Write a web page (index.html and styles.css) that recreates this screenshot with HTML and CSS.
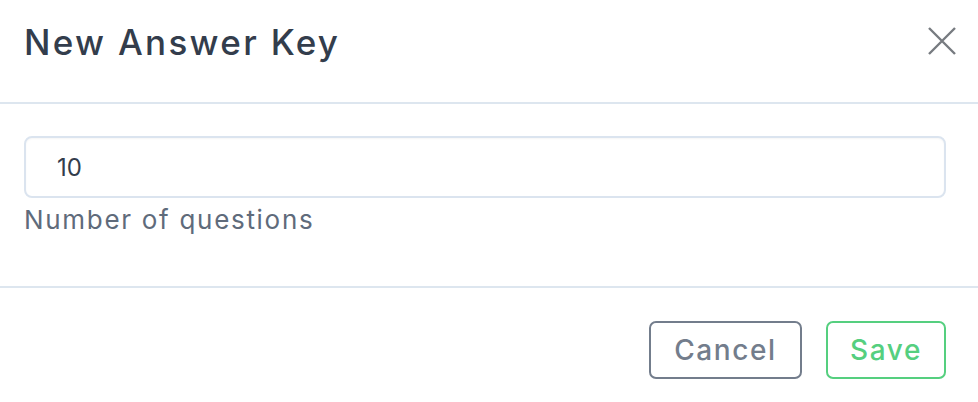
FILE: index.html
```html
<!DOCTYPE html>
<html lang="en">
<head>
<meta charset="utf-8">
<title>New Answer Key</title>
<link rel="stylesheet" href="styles.css">
</head>
<body>
<div class="modal">
  <header class="modal-header">
    <h1 class="modal-title">New Answer Key</h1>
    <button class="close-btn" aria-label="Close">
      <svg width="28" height="28" viewBox="0 0 28 28"><path d="M1 1 L27 27 M27 1 L1 27" stroke="#777b80" stroke-width="2.4" fill="none"/></svg>
    </button>
  </header>
  <section class="modal-body">
    <div class="field">
      <div class="input">10</div>
      <div class="help">Number of questions</div>
    </div>
  </section>
  <footer class="modal-footer">
    <button class="btn btn-cancel">Cancel</button>
    <button class="btn btn-save">Save</button>
  </footer>
</div>
</body>
</html>
```

FILE: styles.css
```css
html, body {
  margin: 0;
  padding: 0;
  background: #ffffff;
}
body {
  font-family: Inter, "Liberation Sans", sans-serif;
}
.modal {
  width: 978px;
  height: 402px;
  display: flex;
  flex-direction: column;
}
.modal-header {
  height: 104px;
  box-sizing: border-box;
  border-bottom: 2px solid #dde6ef;
  display: flex;
  align-items: center;
  justify-content: space-between;
  padding: 0 22px 0 24px;
}
.modal-title {
  margin: 0;
  font-size: 35px;
  font-weight: 500;
  color: #333d4c;
  letter-spacing: 2.3px;
  line-height: 40px;
  padding-bottom: 18px;
}
.close-btn {
  background: none;
  border: 0;
  padding: 0;
  width: 28px;
  height: 28px;
  margin-bottom: 20px;
  display: flex;
}
.modal-body {
  height: 184px;
  box-sizing: border-box;
  border-bottom: 2px solid #dde6ef;
  padding: 32px 32px 0 24px;
}
.input {
  height: 62px;
  box-sizing: border-box;
  border: 2px solid #dbe4ef;
  border-radius: 8px;
  padding-left: 31px;
  display: flex;
  align-items: center;
  font-size: 24px;
  color: #333d4c;
  box-shadow: inset 0 1px 2px rgba(0,0,0,0.04);
}
.help {
  margin-top: 4px;
  font-size: 26px;
  line-height: 36px;
  color: #5f6b7b;
  letter-spacing: 1.7px;
}
.modal-footer {
  display: flex;
  justify-content: flex-end;
  gap: 24px;
  padding: 33px 32px 0 0;
}
.btn {
  height: 58px;
  box-sizing: border-box;
  border-radius: 7px;
  background: #fff;
  font-family: Inter, "Liberation Sans", sans-serif;
  font-size: 28px;
  font-weight: 500;
  letter-spacing: 1.6px;
  border: 2px solid;
  padding: 0;
}
.btn-cancel {
  width: 153px;
  border-color: #737d8c;
  color: #737d8c;
}
.btn-save {
  width: 120px;
  border-color: #55cf7f;
  color: #55cf7f;
}
```
